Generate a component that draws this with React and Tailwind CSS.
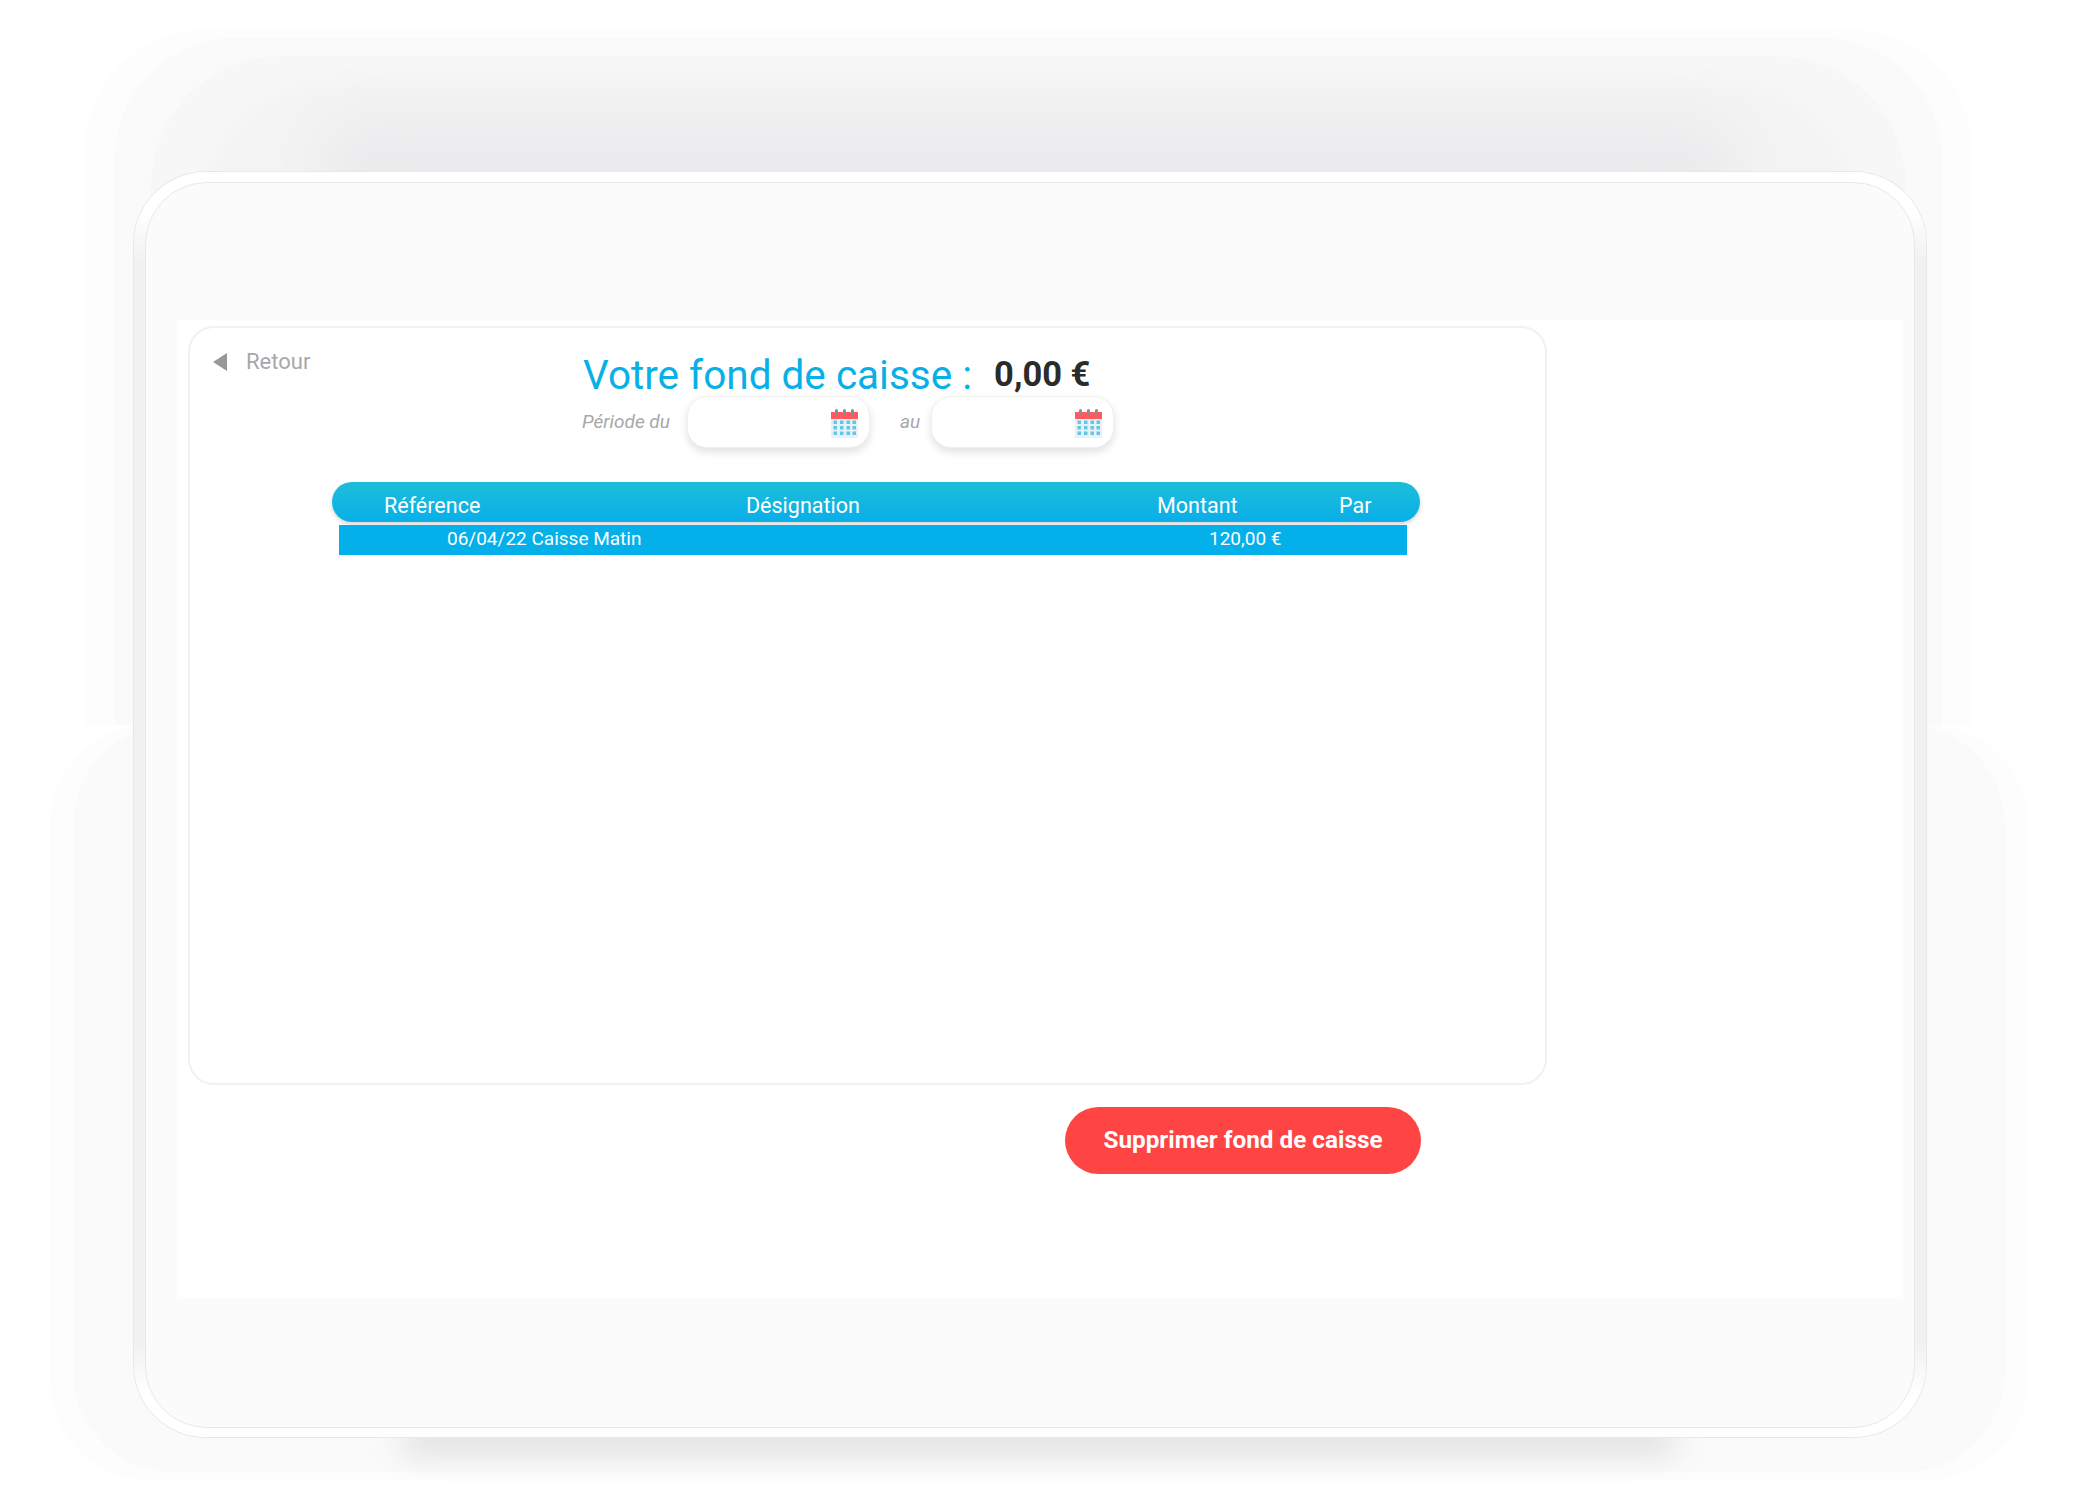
const CalendarIcon = () => (
  <svg width="29" height="30" viewBox="0 0 29 30" className="absolute right-[10px] top-[11px]">
    <rect x="1" y="4" width="27" height="26" fill="#e6f2f6" />
    <rect x="1" y="4" width="27" height="7" fill="#ff5a60" />
    <rect x="5" y="1" width="3" height="6" rx="1.5" fill="#8a8c8f" />
    <rect x="13" y="1" width="3" height="6" rx="1.5" fill="#8a8c8f" />
    <rect x="21" y="1" width="3" height="6" rx="1.5" fill="#8a8c8f" />
    {[14, 19.5, 25].map((y) =>
      [5, 11.5, 18, 24].map((x) => <rect key={`${x}-${y}`} x={x - 1.5} y={y - 1.5} width="3.5" height="3.5" fill="#62c5ea" />)
    )}
  </svg>
);

const DateInput = () => (
  <div className="relative shrink-0 w-[183px] h-[52px] bg-white rounded-[20px] border border-[#f0f0f0] shadow-[0_4px_9px_rgba(0,0,0,0.12)]">
    <CalendarIcon />
  </div>
);

// soft stepped shadow behind the tablet, nested so each ring is just padding
const TopGlow = () => (
  <div className="absolute inset-x-0 top-0 h-[725px] overflow-hidden pt-[30px] pl-[85px] pr-[107px]">
    <div className="h-[900px] rounded-[120px] bg-[#fdfdfd] pt-[8px] px-[30px]">
      <div className="h-full rounded-[120px] bg-[#fafafa] pt-[18px] px-[36px]">
        <div className="h-full rounded-[130px] bg-[#f7f7f8] pt-[25px] px-[50px]">
          <div className="h-full rounded-[140px] bg-[#f3f3f4] pt-[40px] px-[120px] blur-[8px]">
            <div className="h-[110px] rounded-[100px] bg-[#ebebed] blur-[22px]" />
          </div>
        </div>
      </div>
    </div>
  </div>
);

const BottomGlow = () => (
  <div className="absolute inset-x-0 top-[725px] h-[770px] overflow-hidden pl-[50px] pr-[51px] pb-[15px]">
    <div className="h-full rounded-[100px] bg-[#fdfdfd] px-[23px] pb-[8px]">
      <div className="h-full rounded-[100px] bg-[#fafafa] px-[27px] pb-[12px] flex flex-col justify-end">
        <div className="h-[36px] mx-[300px] mb-[2px] rounded-[30px] bg-[#e4e4e6] blur-[14px]" />
      </div>
    </div>
  </div>
);

export default function App() {
  return (
    <div className="relative w-[2079px] h-[1495px] overflow-hidden bg-white font-['Roboto',sans-serif]">
      <TopGlow />
      <BottomGlow />
      <div className="relative ml-[134px] pt-[172px]">
        <div className="w-[1792px] h-[1265px] rounded-[72px] pt-[10px] pb-[9px] px-[11px] bg-[linear-gradient(to_bottom,#ffffff_40px,#f0f1f2_90px,#f0f1f2_1170px,#ffffff_1225px)] shadow-[0_0_0_1px_#e8e8ea]">
          <div className="w-[1770px] h-[1246px] rounded-[62px] bg-[#fbfbfb] border border-[#e9e9ea] pl-[31px] pt-[137px]">
            <div className="w-[1725px] h-[977px] bg-white pl-[11px] pt-[6px]">
              <div className="w-[1359px] h-[759px] rounded-[26px] border-2 border-[#f1f1f1] pl-[23px] pt-[23px]">
                <div className="flex">
                  <div className="w-[370px] shrink-0">
                    <div className="flex items-center gap-[19px] h-[24px] mt-[-1px] text-[22px] leading-[24px] text-[#a6a8aa]">
                      <svg width="14" height="18" viewBox="0 0 14 18">
                        <path d="M14 0V18L0 9Z" fill="#96989a" />
                      </svg>
                      <span>Retour</span>
                    </div>
                  </div>
                  <div className="flex-1 min-w-0">
                    <div className="flex items-center h-[45px] gap-[22px]">
                      <h1 className="text-[40.5px] leading-[46px] pt-[2px] text-[#08b0e8]">Votre fond de caisse :</h1>
                      <span className="text-[34.5px] leading-[46px] font-bold text-[#2b2b2b]">0,00 €</span>
                    </div>
                    <div className="flex items-center h-[52px] ml-[-1px] italic text-[19px] text-[#a6a8aa]">
                      <span className="w-[105px] shrink-0">Période du</span>
                      <DateInput />
                      <span className="w-[61px] shrink-0 pl-[30px]">au</span>
                      <DateInput />
                    </div>
                  </div>
                </div>

                <div className="ml-[119px] mt-[34px] w-[1088px]">
                  <div className="grid grid-cols-[362px_411px_182px_1fr] items-center h-[40px] pl-[52px] pt-[8px] rounded-[20px] bg-[linear-gradient(to_bottom,#1dbdd8,#08afe9)] text-[21.5px] text-white shadow-[0_2px_4px_rgba(0,0,0,0.18)]">
                    <span>Référence</span>
                    <span>Désignation</span>
                    <span>Montant</span>
                    <span>Par</span>
                  </div>
                  <div className="grid grid-cols-[762px_1fr] items-center w-[1068px] h-[30px] ml-[7px] mt-[3px] pl-[108px] pb-[1px] bg-[#04b0ea] text-[19px] text-white">
                    <span>06/04/22 Caisse Matin</span>
                    <span>120,00 €</span>
                  </div>
                </div>
              </div>

              <div className="flex justify-end w-[1359px] pr-[126px] mt-[22px]">
                <button className="w-[356px] h-[67px] pb-[1px] rounded-full bg-[#ff4444] text-[24.3px] font-bold text-white">
                  Supprimer fond de caisse
                </button>
              </div>
            </div>
          </div>
        </div>
      </div>
    </div>
  );
}
